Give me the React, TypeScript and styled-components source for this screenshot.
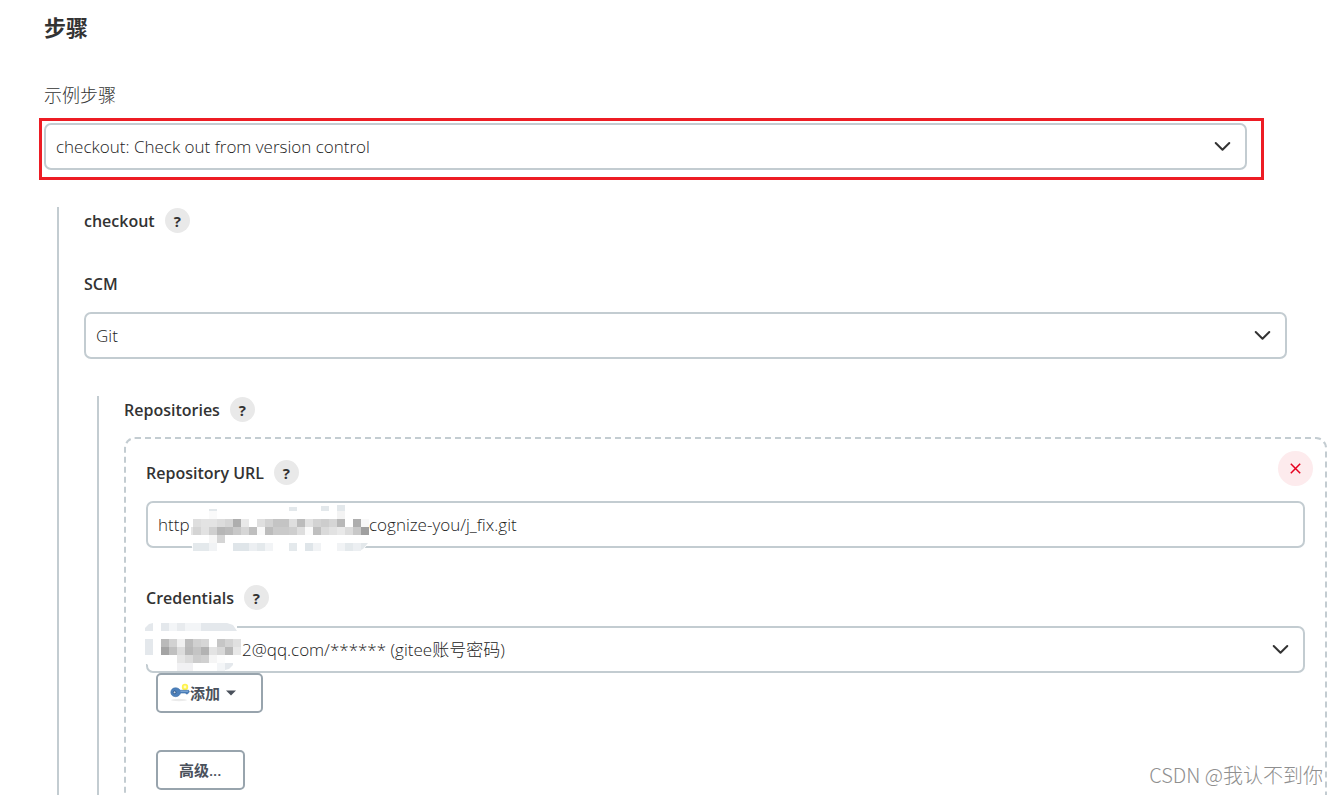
import React from 'react';
import styled, { createGlobalStyle } from 'styled-components';

const GlobalStyle = createGlobalStyle`
  *, *::before, *::after { box-sizing: border-box; }
  body {
    margin: 0;
    background: #fff;
    color: #333;
    font-family: "Open Sans", "Noto Sans CJK SC", sans-serif;
    font-size: 17px;
    line-height: 26px;
  }
  button, input, select { font: inherit; color: inherit; }
`;

const Page = styled.main`
  position: relative;
  display: flex;
  flex-direction: column;
  height: 100vh;
  overflow: hidden;
  padding: 14px 90px 0 44px;
`;

const Heading = styled.h2`
  margin: 0 0 42px;
  font-size: 22px;
  line-height: 26px;
  font-weight: 700;
`;

const LabelRow = styled.div<{ $gap?: number }>`
  display: flex;
  align-items: flex-end;
  gap: 10px;
  flex: none;
  height: 26px;
  margin-bottom: ${(p) => p.$gap ?? 16}px;
`;

const Label = styled.label<{ $plain?: boolean }>`
  font-size: ${(p) => (p.$plain ? 18 : 16)}px;
  line-height: ${(p) => (p.$plain ? 26 : 24)}px;
  font-weight: ${(p) => (p.$plain ? 300 : 600)};
`;

const HelpButton = styled.button`
  display: grid;
  place-items: center;
  width: 25px;
  height: 25px;
  padding: 0;
  border: 0;
  border-radius: 50%;
  background: #e9e9e9;
  font-size: 15px;
  line-height: 24px;
  font-weight: 700;
`;

const Control = styled.div`
  position: relative;
  flex: none;
  display: flex;
  height: 47px;
`;

const Highlight = styled.div`
  flex: none;
  margin: -5px -17px 27px -5px;
  padding: 2px 14px 7px 2px;
  border: 3px solid #ed1c24;
`;

const Select = styled.select<{ $indent?: number }>`
  appearance: none;
  width: 100%;
  height: 47px;
  padding: 1px 44px 0 ${(p) => p.$indent ?? 10}px;
  border: 2px solid #c3ccd1;
  border-radius: 7px;
  background: #fff;
  color: #222;
  font-weight: 300;
`;

const Chevron = styled.svg`
  position: absolute;
  top: 17px;
  right: 15px;
  width: 19px;
  height: 13px;
  pointer-events: none;
`;

const UrlBox = styled.div`
  flex: 1;
  display: flex;
  align-items: center;
  padding: 1px 0 0 10px;
  border: 2px solid #c3ccd1;
  border-radius: 7px;
  color: #222;
  font-weight: 300;
`;

const UrlScheme = styled.span`
  flex: none;
  width: 211px;
`;

const UrlInput = styled.input`
  flex: 1;
  min-width: 0;
  padding: 0;
  border: 0;
  outline: 0;
  background: transparent;
`;

const Mosaic = styled.svg<{ $left: number; $top: number }>`
  position: absolute;
  left: ${(p) => p.$left}px;
  top: ${(p) => p.$top}px;
  pointer-events: none;
`;

const Nested = styled.section`
  flex: 1 0 auto;
  display: flex;
  flex-direction: column;
  margin: 0 -40px 0 13px;
  padding-left: 25px;
  border-left: 2px solid #c3ccd1;
`;

const Field = styled.div<{ $gap?: number }>`
  flex: none;
  margin-bottom: ${(p) => p.$gap ?? 37}px;
`;

const RepoCard = styled.div`
  position: relative;
  flex: 1 0 auto;
  padding: 20px 20px 40px;
  border: 2px dashed #c3ccd1;
  border-radius: 11px;
`;

const RemoveButton = styled.button`
  position: absolute;
  top: 12px;
  right: 12px;
  display: grid;
  place-items: center;
  width: 35px;
  height: 35px;
  padding: 0;
  border: 0;
  border-radius: 50%;
  background: #fdebed;
  color: #e6001f;
`;

const Actions = styled.div`
  display: flex;
  flex-direction: column;
  align-items: flex-start;
  gap: 37px;
  margin-left: 10px;
`;

const Button = styled.button<{ $wide?: boolean }>`
  display: flex;
  align-items: center;
  height: 40px;
  padding: ${(p) => (p.$wide ? '0 25px 0 12px' : '0 22px 0 21px')};
  border: 2px solid #98a4ad;
  border-radius: 5px;
  background: #fff;
  color: #4a515c;
  font-size: 15px;
  line-height: 24px;
  font-weight: 600;
  white-space: nowrap;
`;

const Caret = styled.svg`
  margin-left: 6px;
`;

const Watermark = styled.div`
  position: absolute;
  right: 14px;
  bottom: 6px;
  color: #8f8f8f;
  font-family: "Noto Sans CJK SC", sans-serif;
  font-size: 20px;
  line-height: 28px;
  font-weight: 300;
`;

type Cell = [number, number, string];

const row = (y: number, x: number, colors: string): Cell[] =>
  colors.split(' ').flatMap((c, i): Cell[] => (c === '-' ? [] : [[x + i * 8, y, '#' + c]]));

const urlCells: Cell[] = [
  ...row(14, 2, '- - fafafa - - - - - - - - - - - - - - - f3f3f3'),
  ...row(22, 2, 'dedede e3e3e3 e3e3e3 dcdcdc d5d5d5 aeaeae e9e9e9 - dfdfdf d2d2d2 c4c4c4 c4c4c4 dedede bcbcbc e2e2e2 d3d3d3 cdcdcd d5d5d5 b8b8b8 - aeaeae f8f8f8'),
  ...row(30, 2, 'd4d4d4 e2e2e2 cfcfcf b6b6b6 bbbbbb c8c8c8 d6d6d6 bebebe f9f9f9 bcbcbc cacaca cacaca cecece dedede fbfbfb bfbfbf dadada e2e2e2 e9e9e9 dcdcdc c8c8c8 9f9f9f'),
  ...row(38, 2, '- - f6f6f6 d5d5d5'),
  ...row(46, 2, 'e4e9ec e4e9ec f1f3f5 - - dfe5e9 dfe5e9 eceff2 e4e9ec f2f4f6 - - e4e9ec - dfe5e9 f1f3f5 - - f1f3f5 e4e9ec eceff2'),
];

const credentialCells: Cell[] = [
  ...row(0, 16, 'e4e8ec f3f5f7 e8ebee f3f5f7 f3f5f7 e4e8ec e4e8ec e4e8ec'),
  ...row(16, 0, 'e4e8ec - bababa d2d2d2 f0f0f0 bcbcbc d0d0d0 d6d6d6 - c6c6c6 d3d3d3 e0e0e0'),
  ...row(24, 0, 'e4e8ec - a4a4a4 c0c0c0 dcdcdc b8b8b8 c4c4c4 b2b2b2 e3e3e3 d8d8d8 b8b8b8 e8e8e8'),
  ...row(32, 0, '- - - - e6e6e6 dcdcdc cccccc d0d0d0 f5f5f5 fcfcfc'),
  ...row(40, 0, '- - - - f1f1f3 f1f1f3 - - - f3f5f7'),
];

const Cells = ({ cells }: { cells: Cell[] }) => (
  <g shapeRendering="crispEdges">
    {cells.map(([x, y, fill]) => (
      <rect key={`${x}-${y}`} x={x} y={y} width="8" height="8" fill={fill} />
    ))}
  </g>
);

const Arrow = () => (
  <Chevron viewBox="0 0 19 13" fill="none" aria-hidden="true">
    <path d="M2.7 3l6.8 6.8L16.3 3" stroke="#333" strokeWidth="2" strokeLinecap="round" strokeLinejoin="round" />
  </Chevron>
);

const Help = ({ topic }: { topic: string }) => (
  <HelpButton type="button" title={`Help for feature: ${topic}`}>?</HelpButton>
);

const KeyIcon = () => (
  <svg width="20" height="20" viewBox="0 0 20 20" aria-hidden="true">
    <ellipse cx="9" cy="17" rx="8" ry="1.2" fill="#ebebeb" />
    <circle cx="15" cy="4" r="3.2" fill="#fff34d" />
    <circle cx="15" cy="4" r="1.4" fill="#fffcc4" />
    <path d="M5.500 4.800c2.300 0 3.900 1 4.700 2.500H18c1 0 1.300.7 1.300 1.300S18.800 10 18 10l-.5 1h-1.300l-.6-1h-5c-.7 2.200-2.500 3.700-5 3.700C2.600 13.700.8 11.700.8 9.300S2.700 4.800 5.500 4.800z" fill="#4c80bb" stroke="#3d6ea8" strokeWidth=".6" />
    <path d="M10.500 8.300H18" stroke="#8fb4de" strokeWidth=".8" />
    <circle cx="4.600" cy="9.300" r="1.400" fill="#c5d4e6" stroke="#254b7b" strokeWidth=".8" />
  </svg>
);

export default function App() {
  return (
    <>
      <GlobalStyle />
      <Page>
        <Heading>步骤</Heading>
        <LabelRow $gap={15}>
          <Label $plain htmlFor="step">示例步骤</Label>
        </LabelRow>
        <Highlight>
          <Control>
            <Select id="step">
              <option>checkout: Check out from version control</option>
            </Select>
            <Arrow />
          </Control>
        </Highlight>

        <Nested>
          <LabelRow $gap={37}>
            <Label as="span">checkout</Label>
            <Help topic="checkout" />
          </LabelRow>
          <Field>
            <LabelRow>
              <Label htmlFor="scm">SCM</Label>
            </LabelRow>
            <Control>
              <Select id="scm">
                <option>Git</option>
              </Select>
              <Arrow />
            </Control>
          </Field>

          <Nested>
            <LabelRow $gap={15}>
              <Label as="span">Repositories</Label>
              <Help topic="Repositories" />
            </LabelRow>
            <RepoCard>
              <Field $gap={36}>
                <LabelRow>
                  <Label htmlFor="url">Repository URL</Label>
                  <Help topic="Repository URL" />
                </LabelRow>
                <Control>
                  <UrlBox>
                    <UrlScheme>http</UrlScheme>
                    <UrlInput id="url" defaultValue="cognize-you/j_fix.git" />
                  </UrlBox>
                  <Mosaic $left={45} $top={-4} width="180" height="56" viewBox="0 0 180 56" aria-hidden="true">
                    <path d="M0 46V40h178v6l-7 8H2z" fill="#fff" />
                    <Cells cells={urlCells} />
                    <rect x="0" y="30" width="2" height="8" fill="#e4e4e4" />
                    <path d="M18 12h8v2h-8zM98 10h8v4h-8zM130 9h8v5h-8zM146 8h8v6h-8zM170 46h7l-5 6-2 1z" fill="#e3e8eb" />
                  </Mosaic>
                </Control>
              </Field>

              <LabelRow>
                <Label htmlFor="credentials">Credentials</Label>
                <Help topic="Credentials" />
              </LabelRow>
              <Control>
                <Select id="credentials" $indent={94}>
                  <option>2@qq.com/****** (gitee账号密码)</option>
                </Select>
                <Arrow />
                <Mosaic $left={-1} $top={-3} width="98" height="48" viewBox="0 0 98 48" aria-hidden="true">
                  <path d="M0 0h92v40l-8 8H8l-6-7H0z" fill="#fff" />
                  <Cells cells={credentialCells} />
                  <path d="M0 8V5l4-4 4-1v8zM80 0h2l6 2 4 6H80zM80 40h8v2l-4 4-4 1z" fill="#e4e8ec" />
                </Mosaic>
              </Control>
              <Actions>
                <Button type="button" $wide>
                  <KeyIcon />
                  添加
                  <Caret width="10" height="6" viewBox="0 0 10 6" aria-hidden="true">
                    <path d="M0 .5h10L5 5.500z" fill="#4a515c" />
                  </Caret>
                </Button>
                <Button type="button">高级...</Button>
              </Actions>
              <RemoveButton type="button" aria-label="Remove repository">
                <svg width="11" height="11" viewBox="0 0 11 11" aria-hidden="true">
                  <path d="M.8.800l9.400 9.400M10.200.800L.8 10.200" stroke="currentColor" strokeWidth="1.500" />
                </svg>
              </RemoveButton>
            </RepoCard>
          </Nested>
        </Nested>
        <Watermark>CSDN @我认不到你</Watermark>
      </Page>
    </>
  );
}
